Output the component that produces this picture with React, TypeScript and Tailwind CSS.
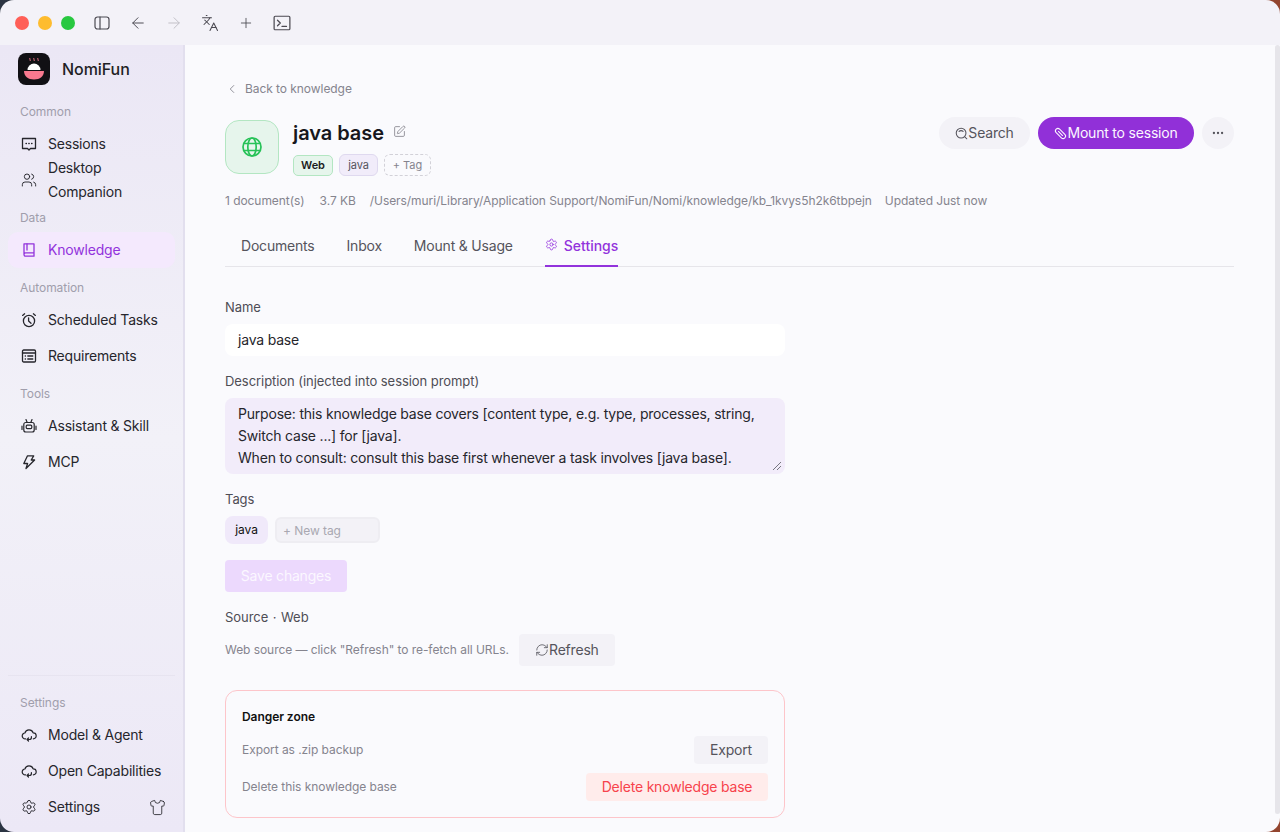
import type { ReactNode } from 'react';
import { Languages, Plus, RefreshCw, Settings, Shirt, SquarePen, ArrowLeft, ArrowRight, ChevronLeft, Users, Ellipsis } from 'lucide-react';

const font = { fontFamily: 'Inter, "Noto Sans", sans-serif' };

const Icon = ({ size = 16, children, className = '', sw = 1.3 }: { size?: number; children: ReactNode; className?: string; sw?: number }) => (
  <svg width={size} height={size} viewBox="0 0 16 16" fill="none" stroke="currentColor" strokeWidth={sw} strokeLinecap="round" strokeLinejoin="round" className={className}>
    {children}
  </svg>
);

const ChatIcon = () => (
  <Icon>
    <path d="M1.5 2.5h13v10H9.5L8 14l-1.5-1.5h-5z" />
    <path d="M5 7.5h.4M7.8 7.5h.4M10.6 7.5h.4" />
  </Icon>
);
const BookIcon = () => (
  <Icon>
    <path d="M3 12.5V1.8h10v12.4H4.6A1.6 1.6 0 0 1 3 12.5a1.6 1.6 0 0 1 1.6-1.6H13" />
    <path d="M6 2v6" />
  </Icon>
);
const ClockIcon = () => (
  <Icon>
    <circle cx="8" cy="9" r="5.6" />
    <path d="M7.6 5.8V9l2.4 2.2M1.6 3.4 3.6 1.8M14.4 3.4l-2-1.6" />
  </Icon>
);
const ListIcon = () => (
  <Icon>
    <rect x="1.5" y="2" width="13" height="12" rx="1.2" />
    <path d="M1.5 5h13M4.2 8h.3M6.8 8h5M4.2 11h.3M6.8 11h5" />
  </Icon>
);
const RobotIcon = () => (
  <Icon sw={1.2}>
    <path d="M5 1.5 6.2 4.5M11 1.5 9.8 4.5" />
    <rect x="2.8" y="4.5" width="10.4" height="9.5" rx="2" />
    <rect x="5.2" y="7.2" width="5.6" height="3.4" rx="1" />
    <path d="M1 8v3.5M15 8v3.5" />
  </Icon>
);
const BoltIcon = () => (
  <Icon>
    <path d="M6.5 1.8h6.2L10.2 6h3.4L5 14.5l1.6-5H2.8z" />
  </Icon>
);
const CloudIcon = () => (
  <Icon sw={1.2}>
    <path d="M4.6 11.8h-.3A2.9 2.9 0 0 1 3.9 6a4.3 4.3 0 0 1 8.2-.2 3 3 0 0 1 .2 6" />
    <path d="M10.4 9.6v.9a2 2 0 0 1-2 2H6M7.5 11 6 12.5 7.5 14" />
  </Icon>
);

const SectionLabel = ({ children, className = '' }: { children: ReactNode; className?: string }) => (
  <div className={`px-5 text-xs leading-5 text-[#a09eac] ${className}`}>{children}</div>
);

const NavItem = ({ icon, children, active, right }: { icon: ReactNode; children: ReactNode; active?: boolean; right?: ReactNode }) => (
  <div className={`mx-2 flex h-9 items-center gap-[10px] rounded-[10px] px-3 text-sm leading-6 tracking-[-0.2px] ${active ? 'bg-[#f4e9fd] text-[#9233dc]' : 'text-[#26262c]'}`}>
    <span className="flex w-[18px] justify-center">{icon}</span>
    <span className="flex-1 whitespace-nowrap">{children}</span>
    {right}
  </div>
);

const Sidebar = () => (
  <aside className="flex h-full w-[185px] shrink-0 flex-col border-r-2 border-[#e2dfee] bg-gradient-to-b from-[#ebe7f5] via-[#f2f1f8] to-[#ece8f6]">
    <div className="flex h-[48px] items-center gap-[12px] px-[18px]">
      <div className="flex h-8 w-8 items-center justify-center rounded-lg bg-[#111014]">
        <svg width="22" height="26" viewBox="0 0 22 26">
          <path d="M7 2c-1 1 1 2 0 3M11 2c-1 1 1 2 0 3M15 2c-1 1 1 2 0 3" stroke="#f5778f" strokeWidth="1" fill="none" />
          <path d="M4.5 14a6.5 6.5 0 0 1 13 0z" fill="#fff" />
          <path d="M1 15h20c0 5-4 8.5-10 8.5S1 20 1 15z" fill="#f8798f" />
        </svg>
      </div>
      <span className="text-base font-medium text-[#1f1f25]">NomiFun</span>
    </div>
    <SectionLabel className="mt-[9px]">Common</SectionLabel>
    <div className="mt-[4px]">
      <NavItem icon={<ChatIcon />}>Sessions</NavItem>
      <NavItem icon={<Users size={16} strokeWidth={1.4} />}>Desktop<br />Companion</NavItem>
    </div>
    <SectionLabel className="mt-[10px]">Data</SectionLabel>
    <div className="mt-[4px]">
      <NavItem active icon={<BookIcon />}>Knowledge</NavItem>
    </div>
    <SectionLabel className="mt-[10px]">Automation</SectionLabel>
    <div className="mt-[4px]">
      <NavItem icon={<ClockIcon />}>Scheduled Tasks</NavItem>
      <NavItem icon={<ListIcon />}>Requirements</NavItem>
    </div>
    <SectionLabel className="mt-[10px]">Tools</SectionLabel>
    <div className="mt-[4px]">
      <NavItem icon={<RobotIcon />}>Assistant &amp; Skill</NavItem>
      <NavItem icon={<BoltIcon />}>MCP</NavItem>
    </div>
    <div className="mt-auto pb-[7px]">
      <div className="mx-2 border-t border-[#e7e4f0]" />
      <SectionLabel className="mt-[17px]">Settings</SectionLabel>
      <div className="mt-[4px]">
        <NavItem icon={<CloudIcon />}>Model &amp; Agent</NavItem>
        <NavItem icon={<CloudIcon />}>Open Capabilities</NavItem>
        <NavItem icon={<Settings size={16} strokeWidth={1.4} />} right={<Shirt size={17} strokeWidth={1.2} className="-mr-[3px]" />}>Settings</NavItem>
      </div>
    </div>
  </aside>
);

const TitleBar = () => (
  <div className="flex h-[45px] shrink-0 items-center bg-[#f3f2f8] pl-[15px] text-[#4b4a52]">
    <div className="flex gap-[9px]">
      <span className="h-[14px] w-[14px] rounded-full bg-[#ff5f57]" />
      <span className="h-[14px] w-[14px] rounded-full bg-[#febc2e]" />
      <span className="h-[14px] w-[14px] rounded-full bg-[#28c840]" />
    </div>
    <Icon className="ml-[19px]" sw={1.2}>
      <rect x="1" y="2" width="14" height="12" rx="2.5" />
      <path d="M6 2v12" />
    </Icon>
    <ArrowLeft size={18} strokeWidth={1.3} className="ml-[19px]" />
    <ArrowRight size={18} strokeWidth={1.3} className="ml-[18px] text-[#c0bfc6]" />
    <Languages size={18} strokeWidth={1.4} className="ml-[18px]" />
    <Plus size={16} strokeWidth={1.3} className="ml-[19px]" />
    <Icon size={18} className="ml-[19px]" sw={1.1}>
      <rect x="1" y="2" width="14" height="12" rx="1" />
      <path d="M4 5.5 6.5 8 4 10.5M8 11h4" />
    </Icon>
  </div>
);

const FieldLabel = ({ children }: { children: ReactNode }) => (
  <div className="text-[13px] leading-5 text-[#4e4d55]">{children}</div>
);

const Main = () => (
  <main className="relative h-full min-w-0 flex-1 overflow-hidden bg-[#fafafd] pl-10 pr-[46px] pt-[34px]">
    <div className="absolute right-0 top-0 h-[769px] w-[5px] rounded-full bg-[#e6e5ea]" />
    <div className="flex h-5 items-center gap-[6px] text-xs text-[#85848e]">
      <ChevronLeft size={14} strokeWidth={1.5} />
      <span>Back to knowledge</span>
    </div>
    <div className="mt-[21px] flex items-start justify-between">
      <div className="flex gap-[14px]">
        <div className="flex h-[54px] w-[54px] items-center justify-center rounded-[14px] border border-[#b3e6c2] bg-[#e6f5ec]">
          <svg width="22" height="22" viewBox="0 0 22 22" fill="none" stroke="#27c258" strokeWidth="1.7">
            <circle cx="11" cy="11" r="9" />
            <ellipse cx="11" cy="11" rx="4.2" ry="9" />
            <path d="M3 7.5h16M3 14.5h16" />
          </svg>
        </div>
        <div>
          <div className="-mt-[1px] flex items-center gap-[9px]">
            <span className="text-xl font-semibold leading-7 text-[#17171c]">java base</span>
            <SquarePen size={13} strokeWidth={1.3} className="-mt-[3px] text-[#6f6e77]" />
          </div>
          <div className="mt-[7px] flex items-center gap-[6px]">
            <span className="flex h-[21px] w-10 items-center justify-center rounded-[5px] border border-[#b3e6c2] bg-[#e6f5ec] text-[11px] font-semibold text-[#1b1b20]">Web</span>
            <span className="flex h-[22px] w-[39px] items-center justify-center rounded-md border border-[#dfd9ef] bg-[#f1ecfa] text-[11px] text-[#55545c]">java</span>
            <span className="flex h-[22px] w-[47px] items-center justify-center rounded-md border border-dashed border-[#d2d1d8] text-[11px] text-[#85848e]">+ Tag</span>
          </div>
        </div>
      </div>
      <div className="-mt-[3px] flex items-center gap-2">
        <button className="flex h-8 w-[91px] items-center justify-center rounded-full bg-[#f3f2f7] text-sm tracking-[-0.2px] text-[#55545c]">
          <Icon size={13} sw={1.3}>
            <circle cx="7.5" cy="7.5" r="6" />
            <path d="M12 12l2.5 2.5M5 5.5a3.5 3.5 0 0 1 5 0" />
          </Icon>
          Search
        </button>
        <button className="flex h-8 w-[156px] items-center justify-center rounded-full bg-[#9130d8] text-sm tracking-[-0.2px] text-[#fbf7ff]">
          <Icon size={13} sw={1.3}>
            <g transform="rotate(-45 8 8)">
              <rect x="5" y="0.5" width="6" height="15" rx="3" />
              <path d="M8 4.5v7" />
            </g>
          </Icon>
          Mount to session
        </button>
        <button className="flex h-8 w-8 items-center justify-center rounded-full bg-[#f3f2f7] text-[#55545c]">
          <Ellipsis size={14} />
        </button>
      </div>
    </div>
    <div className="mt-[15px] flex h-5 items-center gap-[14px] whitespace-nowrap text-xs text-[#85848e]">
      <span className="mr-[1px]">1 document(s)</span>
      <span>3.7 KB</span>
      <span className="-mr-[1px]">/Users/muri/Library/Application Support/NomiFun/Nomi/knowledge/kb_1kvys5h2k6tbpejn</span>
      <span>Updated Just now</span>
    </div>
    <div className="mt-[16px] flex h-[40px] gap-8 border-b border-[#e6e5ea] pl-4 text-sm tracking-[-0.2px] text-[#55545c]">
      <span className="pt-[9px]">Documents</span>
      <span className="pt-[9px]">Inbox</span>
      <span className="pt-[9px]">Mount &amp; Usage</span>
      <span className="flex h-[40px] items-start gap-[6px] border-b-2 border-[#9233dc] pt-[9px] font-medium tracking-normal text-[#9233dc]">
        <Settings size={13} strokeWidth={1.5} className="mt-[2px]" />Settings
      </span>
    </div>
    <div className="w-[560px]">
      <div className="mt-[30px]"><FieldLabel>Name</FieldLabel></div>
      <div className="mt-[7px] flex h-8 items-center rounded-lg bg-white px-[13px] text-sm tracking-[-0.2px] text-[#26262c]">java base</div>
      <div className="mt-[15px]"><FieldLabel>Description (injected into session prompt)</FieldLabel></div>
      <div className="relative mt-[7px] h-[76px] rounded-lg bg-[#f2ecfa] px-[13px] pt-[5px] text-sm leading-[22px] tracking-[-0.2px] text-[#26262c]">
        Purpose: this knowledge base covers [content type, e.g. type, processes, string,<br />
        Switch case ...] for [java].<br />
        When to consult: consult this base first whenever a task involves [java base].
        <svg width="10" height="10" viewBox="0 0 10 10" className="absolute bottom-[3px] right-[3px]">
          <path d="M1 9 9 1M5 9 9 5" stroke="#77767f" strokeWidth="1" />
        </svg>
      </div>
      <div className="mt-[15px]"><FieldLabel>Tags</FieldLabel></div>
      <div className="mt-[7px] flex items-center gap-[7px]">
        <span className="flex h-7 w-[43px] items-center justify-center rounded-lg bg-[#f0e9fa] text-xs text-[#111]">java</span>
        <span className="flex h-[26px] w-[105px] items-center rounded-md border-2 border-[#eeedf2] bg-[#f3f2f7] px-[6px] pt-[1px] text-xs text-[#a9a8b1]">+ New tag</span>
      </div>
      <button className="mt-[16px] flex h-8 w-[122px] items-center justify-center rounded-sm bg-[#ecd9fd] text-sm tracking-[-0.2px] text-[#fbf7ff]">Save changes</button>
      <div className="mt-[15px]"><FieldLabel>Source <span className="mx-[1px]">·</span> Web</FieldLabel></div>
      <div className="mt-[7px] flex items-center gap-[10px]">
        <span className="text-xs text-[#85848e]">Web source — click "Refresh" to re-fetch all URLs.</span>
        <button className="flex h-8 w-24 items-center justify-center rounded-sm bg-[#f3f2f7] text-sm tracking-[-0.2px] text-[#55545c]">
          <RefreshCw size={14} strokeWidth={1.4} />Refresh
        </button>
      </div>
      <div className="mt-[24px] h-[128px] rounded-xl border border-[#fdc5ca] px-4 pt-4">
        <div className="text-xs font-semibold leading-5 text-[#111]">Danger zone</div>
        <div className="mt-[9px] flex h-7 items-center justify-between">
          <span className="text-xs text-[#85848e]">Export as .zip backup</span>
          <button className="flex h-7 w-[74px] items-center justify-center rounded-sm bg-[#f3f2f7] text-sm tracking-[-0.2px] text-[#55545c]">Export</button>
        </div>
        <div className="mt-[9px] flex h-7 items-center justify-between">
          <span className="text-xs text-[#85848e]">Delete this knowledge base</span>
          <button className="flex h-7 w-[182px] items-center justify-center rounded-sm bg-[#ffeceb] text-sm tracking-[-0.2px] text-[#f7434c]">Delete knowledge base</button>
        </div>
      </div>
    </div>
  </main>
);

export default function App() {
  return (
    <div className="h-[832px] w-[1280px] overflow-hidden bg-gradient-to-r from-[#2b3442] to-[#93452f] tracking-[-0.06px]" style={font}>
      <div className="flex h-full flex-col overflow-hidden rounded-[14px]">
        <TitleBar />
        <div className="flex min-h-0 flex-1">
          <Sidebar />
          <Main />
        </div>
      </div>
    </div>
  );
}
